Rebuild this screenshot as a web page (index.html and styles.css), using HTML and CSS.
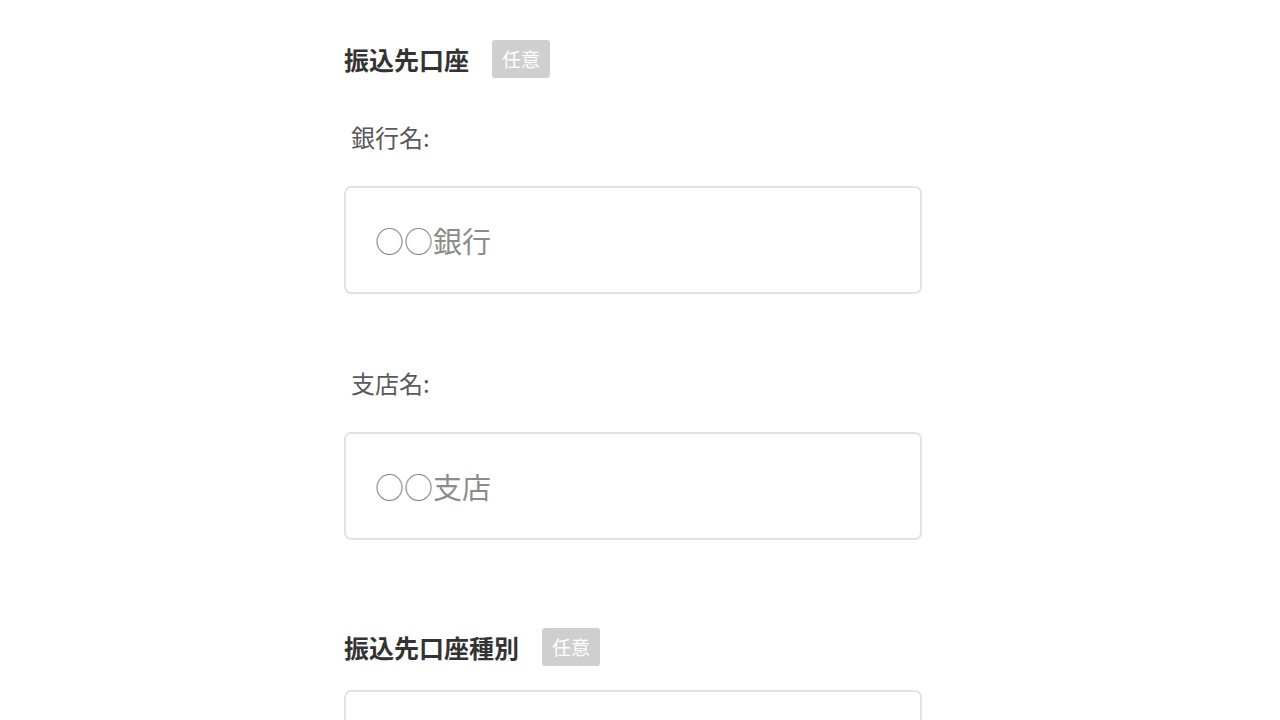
FILE: index.html
```html
<!DOCTYPE html>
<html lang="ja">
<head>
    <meta charset="UTF-8">
    <meta name="viewport" content="width=device-width, initial-scale=1.0">
    <title>振込先口座</title>
    <link rel="stylesheet" href="styles.css">
</head>
<body>

    <form class="account-form">
        <div class="section">
            <div class="section-title">
                <h3>振込先口座</h3>
                <span class="badge">任意</span>
            </div>

            <div class="field">
                <label for="bankName">銀行名:</label>
                <input type="text" id="bankName" placeholder="○○銀行">
            </div>

            <div class="field">
                <label for="branchName">支店名:</label>
                <input type="text" id="branchName" placeholder="○○支店">
            </div>
        </div>

        <div class="section">
            <div class="section-title">
                <h3>振込先口座種別</h3>
                <span class="badge">任意</span>
            </div>

            <div class="select-box"></div>
        </div>
    </form>

</body>
</html>
```

FILE: styles.css
```css
body {
    font-family: 'Noto Sans CJK JP', 'Noto Sans', sans-serif;
    background-color: #ffffff;
    color: #333333;
    margin: 0;
    overflow: hidden;
}

.account-form {
    width: 578px;
    margin-left: 344px;
    padding-top: 40px;
}

.section + .section {
    margin-top: 88px;
}

.section-title {
    display: flex;
    align-items: center;
    gap: 23px;
    height: 38px;
}

.section-title h3 {
    margin: 0;
    font-size: 25px;
    font-weight: 700;
    color: #333333;
    line-height: 38px;
}

.badge {
    background-color: #cfcfcf;
    color: #ffffff;
    font-size: 19px;
    line-height: 38px;
    padding: 0 10px;
    border-radius: 3px;
}

.field {
    margin-top: 74px;
}

.section-title + .field {
    margin-top: 44px;
}

.field label {
    display: block;
    padding-left: 7px;
    font-size: 24px;
    line-height: 30px;
    color: #595959;
}

.field input {
    display: block;
    box-sizing: border-box;
    width: 100%;
    height: 108px;
    margin-top: 34px;
    padding: 0 29px;
    border: 2px solid #e2e2e2;
    border-radius: 7px;
    font-family: 'Noto Sans CJK JP', 'Noto Sans', sans-serif;
    font-size: 29px;
    color: #333333;
    outline: none;
}

.field input::placeholder {
    color: #8c8c8c;
}

.select-box {
    box-sizing: border-box;
    height: 108px;
    margin-top: 24px;
    border: 2px solid #e2e2e2;
    border-radius: 7px;
}
```
